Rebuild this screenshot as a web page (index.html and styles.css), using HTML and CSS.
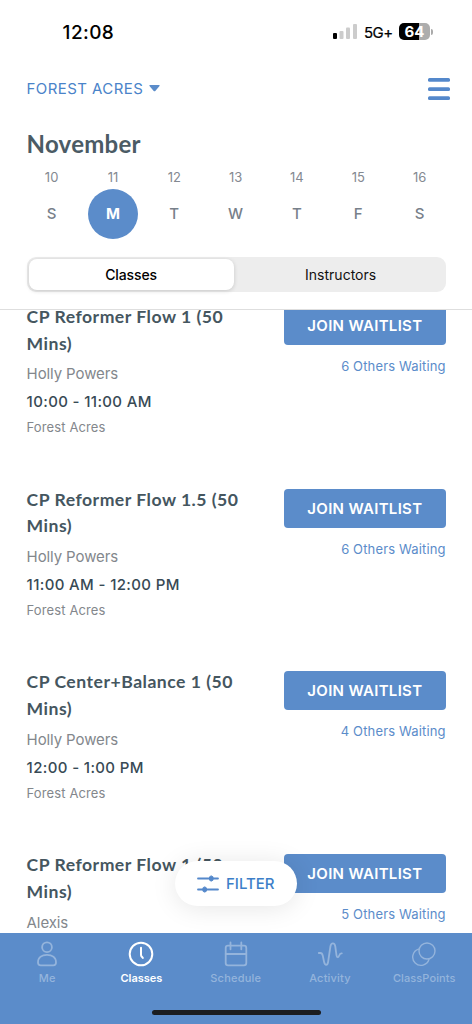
FILE: index.html
```html
<!DOCTYPE html>
<html lang="en">
<head>
<meta charset="utf-8">
<title>Classes</title>
<link rel="stylesheet" href="styles.css">
</head>
<body>
<div class="app">
  <header class="header">
    <div class="status">
      <span class="clock">12:08</span>
      <div class="status-right">
        <svg class="signal" width="24" height="15" viewBox="0 0 24 15"><rect x="0" y="9" width="4" height="6" rx="1" fill="#000"/><rect x="6.500" y="7" width="4" height="8" rx="1" fill="#ccc"/><rect x="13" y="3.500" width="4" height="11.500" rx="1" fill="#ccc"/><rect x="20" y="0" width="4" height="15" rx="1" fill="#ccc"/></svg>
        <span class="network">5G+</span>
        <div class="battery"><span class="battery-level">64</span></div>
        <span class="battery-tip"></span>
      </div>
    </div>
    <div class="topbar">
      <div class="location"><span>FOREST ACRES</span><svg width="11" height="7" viewBox="0 0 11 7"><path d="M1 0h9q1.200 0 .5 1L6.300 5.900q-.8.800-1.600 0L.5 1Q-.2 0 1 0z" fill="#5b8cca"/></svg></div>
      <svg class="menu" width="22" height="22" viewBox="0 0 22 22" fill="#5488cb"><rect y="0" width="22" height="3.700" rx="1.500"/><rect y="9.200" width="22" height="3.700" rx="1.500"/><rect y="18.300" width="22" height="3.700" rx="1.500"/></svg>
    </div>
    <h1 class="month">November</h1>
    <div class="week">
      <div class="day"><span class="num">10</span><span class="letter">S</span></div>
      <div class="day"><span class="num">11</span><span class="letter selected">M</span></div>
      <div class="day"><span class="num">12</span><span class="letter">T</span></div>
      <div class="day"><span class="num">13</span><span class="letter">W</span></div>
      <div class="day"><span class="num">14</span><span class="letter">T</span></div>
      <div class="day"><span class="num">15</span><span class="letter">F</span></div>
      <div class="day"><span class="num">16</span><span class="letter">S</span></div>
    </div>
    <div class="segmented"><span class="segment active">Classes</span><span class="segment">Instructors</span></div>
  </header>

  <main class="viewport">
    <div class="list">
      <article class="class">
        <div class="info"><h2 class="title">CP Reformer Flow 1 (50<br>Mins)</h2><span class="name">Holly Powers</span><span class="time">10:00 - 11:00 AM</span><span class="place">Forest Acres</span></div>
        <div class="action"><button class="join">JOIN WAITLIST</button><span class="waiting">6 Others Waiting</span></div>
      </article>
      <article class="class">
        <div class="info"><h2 class="title">CP Reformer Flow 1.5 (50<br>Mins)</h2><span class="name">Holly Powers</span><span class="time">11:00 AM - 12:00 PM</span><span class="place">Forest Acres</span></div>
        <div class="action"><button class="join">JOIN WAITLIST</button><span class="waiting">6 Others Waiting</span></div>
      </article>
      <article class="class">
        <div class="info"><h2 class="title">CP Center+Balance 1 (50<br>Mins)</h2><span class="name">Holly Powers</span><span class="time">12:00 - 1:00 PM</span><span class="place">Forest Acres</span></div>
        <div class="action"><button class="join">JOIN WAITLIST</button><span class="waiting">4 Others Waiting</span></div>
      </article>
      <article class="class">
        <div class="info"><h2 class="title">CP Reformer Flow 1 (50<br>Mins)</h2><span class="name">Alexis</span></div>
        <div class="action"><button class="join">JOIN WAITLIST</button><span class="waiting">5 Others Waiting</span></div>
      </article>
    </div>
    <button class="filter">
      <svg width="22" height="18" viewBox="0 0 22 18" stroke="#5488cb" stroke-width="1.800" stroke-linecap="round" fill="#5488cb"><path d="M1 3.500h20M1 14.500h20"/><ellipse cx="14.300" cy="3.500" rx="2" ry="2.600" stroke-width="1"/><ellipse cx="7.700" cy="14.500" rx="2" ry="2.600" stroke-width="1"/></svg>
      <span>FILTER</span>
    </button>
  </main>

  <nav class="tabs">
    <div class="tab-row">
      <div class="tab"><svg class="tab-icon" viewBox="0 0 26 26"><circle cx="13" cy="6.200" r="4.900"/><path d="M4 21.500c0-5 4-7.700 9-7.700s9 2.700 9 7.700c0 1.800-1 2.800-2.700 2.800H6.700C5 24.300 4 23.300 4 21.500z"/></svg><span>Me</span></div>
      <div class="tab current"><svg class="tab-icon" viewBox="0 0 26 26"><circle cx="13" cy="13" r="11.300"/><path d="M13 6.700v7q0 1.200.8 2l1 1.200"/></svg><span>Classes</span></div>
      <div class="tab"><svg class="tab-icon" viewBox="0 0 26 26"><rect x="2.700" y="4.700" width="20.600" height="19.600" rx="2.300"/><path d="M2.700 13h20.600M7.500 1.500v6.800M18.300 1.500v6.800"/></svg><span>Schedule</span></div>
      <div class="tab"><svg class="tab-icon" viewBox="0 0 26 26"><path d="M1.800 12h1.600c1.700 0 2 1 2.400 2.700l1.300 6.300c.8 3.700 3.400 3.700 4 0l2.300-15.500c.7-4.200 4.300-4.200 4.900 0l1.200 8.800c.4 2.600 1.900 2.400 2.600.4.600-1.800 1-2.400 2.200-2.400h.5"/></svg><span>Activity</span></div>
      <div class="tab points"><svg class="tab-icon thin" viewBox="0 0 26 26"><circle cx="16" cy="10" r="8"/><path d="M7.600 8.100A8.300 8.300 0 1 0 18 18.300"/></svg><span>ClassPoints</span></div>
    </div>
    <div class="home-indicator"></div>
  </nav>
</div>
</body>
</html>
```
FILE: styles.css
```css
* { box-sizing: border-box; }
body { margin: 0; background: #fff; font-family: Inter, "Liberation Sans", sans-serif; }
button { border: 0; font-family: inherit; padding: 0; }
.app { width: 472px; height: 1024px; display: flex; flex-direction: column; overflow: hidden; }
.header { height: 310px; flex: none; border-bottom: 1px solid #dedede; padding: 0 26.4px 0 26.6px; }

.status { height: 66px; display: flex; justify-content: space-between; padding: 0 12.6px 0 36px; }
.clock { font-size: 19px; font-weight: 500; line-height: 24px; margin-top: 21px; letter-spacing: 0.4px; }
.status-right { display: flex; align-items: center; height: 18px; margin-top: 23px; }
.signal { margin-top: -2px; }
.network { font-size: 15px; line-height: 18px; width: 28px; margin: 2px 7px 0; letter-spacing: -0.6px; -webkit-text-stroke: 0.2px #000; }
.battery { width: 31px; height: 17px; margin-top: -1px; border-radius: 5px; background: linear-gradient(90deg, #000 64%, #adadad 64%); color: #fff; font-size: 15px; font-weight: 700; line-height: 17px; text-align: center; }
.battery-tip { width: 2px; height: 6px; margin: -1px 0 0 1px; border-radius: 0 2px 2px 0; background: #aaa; }

.topbar { height: 46px; display: flex; justify-content: space-between; align-items: center; }
.location { display: flex; align-items: center; gap: 6px; font-size: 15px; line-height: 20px; letter-spacing: 0.42px; color: #4a83c9; }
.location svg { margin-top: -2px; }
.menu { margin-right: -4px; }
.month { margin: 16px 0 0; height: 32px; font-family: Lato, sans-serif; font-size: 24px; line-height: 32px; font-weight: 700; letter-spacing: 0.25px; color: #4b5b65; }

.week { display: flex; justify-content: space-between; margin: 9px 1px 0 0; }
.day { width: 50px; display: flex; flex-direction: column; align-items: center; }
.num { font-size: 13px; line-height: 17px; color: #848991; }
.letter { width: 50px; height: 50px; margin-top: 3px; font-size: 15px; line-height: 49px; font-weight: 500; text-align: center; color: #77808a; }
.letter.selected { border-radius: 50%; background: #5b8cca; color: #fff; font-weight: 700; }

.segmented { height: 35px; margin-top: 18px; padding: 2px; display: flex; border-radius: 9px; background: #ededed; }
.segment { flex: 1; padding-left: 4px; font-size: 14px; line-height: 31px; text-align: center; color: #111; }
.segment.active { flex: 0 0 205px; padding-left: 0; border-radius: 8px; background: #fff; color: #000; font-weight: 500; letter-spacing: -0.1px; box-shadow: 0 1px 4px rgba(0, 0, 0, 0.16); }

.viewport { position: relative; flex: 1; min-height: 0; overflow: hidden; }
.list { margin-top: -7px; padding: 0 26.4px 0 26.6px; }
.class { height: 182.700px; display: flex; justify-content: space-between; }
.info { display: flex; flex-direction: column; white-space: nowrap; padding-top: 1px; }
.title { margin: 0; font-family: Lato, sans-serif; font-size: 17.600px; font-weight: 700; line-height: 26.600px; letter-spacing: 0.5px; color: #45565f; }
.name { margin-top: 7.300px; font-size: 15px; line-height: 20px; letter-spacing: -0.1px; color: #83878c; }
.time { margin-top: 7px; font-size: 15px; line-height: 22px; font-weight: 500; letter-spacing: 0.36px; color: #384a55; }
.place { margin-top: 5px; font-size: 13px; line-height: 18px; letter-spacing: 0.12px; color: #83878c; }
.action { display: flex; flex-direction: column; align-items: flex-end; padding-top: 3px; }
.join { width: 161.500px; height: 39px; border-radius: 4px; background: #5b8cca; color: #fff; font-size: 15px; line-height: 39px; font-weight: 600; letter-spacing: 0.3px; }
.waiting { margin-top: 12px; font-size: 13px; line-height: 18px; letter-spacing: 0.14px; color: #5b8cca; }

.filter { position: absolute; left: 175px; top: 551px; width: 122px; height: 45px; display: flex; align-items: center; gap: 7px; padding-left: 22px; border-radius: 23px; background: #fff; box-shadow: 0 2px 26px rgba(0, 0, 0, 0.1); color: #3c7fc9; font-size: 15px; font-weight: 500; }

.tabs { height: 91px; flex: none; background: #5b8cca; display: flex; flex-direction: column; align-items: center; }
.tab-row { width: 100%; height: 76px; padding: 8px 0.6px 0 0; display: flex; }
.tab { flex: 1; display: flex; flex-direction: column; align-items: center; color: #94b4dc; font-size: 11px; font-weight: 500; line-height: 14px; letter-spacing: 0.2px; }
.tab.points { letter-spacing: 0.1px; }
.tab-icon { width: 26px; height: 26px; margin-bottom: 4px; fill: none; stroke: currentColor; stroke-width: 1.800; stroke-linecap: round; stroke-linejoin: round; }
.tab-icon.thin { stroke-width: 1.400; }
.tab.current { color: #fff; font-weight: 600; letter-spacing: 0; }
.tab.current .tab-icon { stroke-width: 2; }
.home-indicator { width: 169px; height: 5px; margin-top: 1px; border-radius: 3px; background: #1b1d20; }
```
